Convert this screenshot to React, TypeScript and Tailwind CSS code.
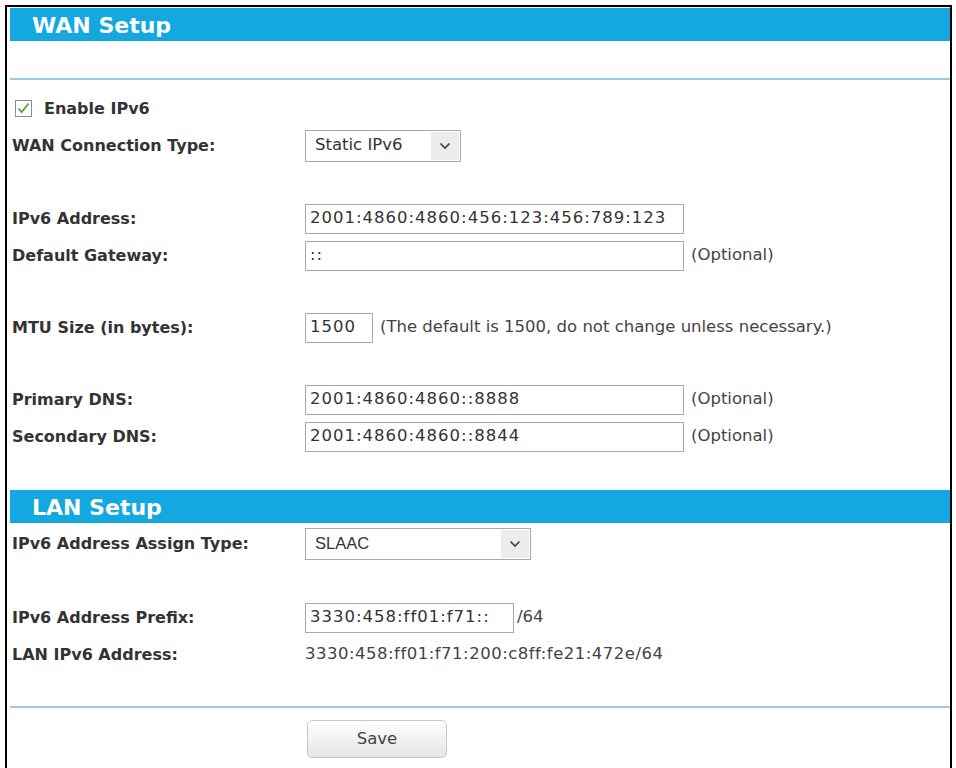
import React from "react";

const font = { fontFamily: '"DejaVu Sans", Verdana, sans-serif' };

function SectionHeader({ title }: { title: string }) {
  return (
    <div className="h-[33px] bg-[#13a8e0] flex items-center pl-[22px] pt-[3px]">
      <span className="text-[22px] font-bold text-white leading-none">{title}</span>
    </div>
  );
}

function Row({ label, children }: { label: string; children?: React.ReactNode }) {
  return (
    <div className="h-[37px] flex items-center">
      <div className="w-[295px] pl-[2px] text-[16px] font-bold text-[#333]">{label}</div>
      <div className="flex items-center">{children}</div>
    </div>
  );
}

function TextBox({ value, w }: { value: string; w: string }) {
  return (
    <div
      className={`${w} h-[30px] border border-[#a9a9a9] bg-white flex items-center pl-[4px] text-[16.5px] tracking-[1px] text-[#333] whitespace-nowrap overflow-hidden`}
    >
      {value}
    </div>
  );
}

function Chevron() {
  return (
    <svg width="12" height="8" viewBox="0 0 12 8" fill="none">
      <path d="M1.5 1.5l4.5 4.5 4.5-4.5" stroke="#444" strokeWidth="1.7" />
    </svg>
  );
}

function Select({ value, w, arial }: { value: string; w: string; arial?: boolean }) {
  return (
    <div className={`${w} h-[32px] border border-[#a9a9a9] bg-white flex items-stretch`}>
      <div
        className="flex-1 flex items-center pl-[9px] text-[16.5px] text-[#333]"
        style={arial ? { fontFamily: '"Liberation Sans", Arial, sans-serif' } : undefined}
      >
        {value}
      </div>
      <div className="w-[28px] bg-[#ececec] flex items-center justify-center m-px">
        <Chevron />
      </div>
    </div>
  );
}

function Note({ children }: { children: React.ReactNode }) {
  return <span className="ml-[7px] text-[16.5px] text-[#444] whitespace-nowrap">{children}</span>;
}

export default function App() {
  return (
    <div className="min-h-screen bg-white pt-[5px] pl-[5px]" style={font}>
      <div className="w-[947px] border-2 border-black pl-[3px] pt-px pb-[24px]">
        <SectionHeader title="WAN Setup" />
        <div className="h-[37px]" />
        <div className="h-[2px] bg-[#98cfe0]" />
        <div className="h-[10px]" />

        <div className="h-[37px] flex items-center pl-[5px]">
          <svg width="17" height="17" viewBox="0 0 17 17">
            <rect x="0.5" y="0.5" width="16" height="16" fill="white" stroke="#8a8a8a" />
            <path d="M3.5 8.5l3.2 3.6L13.5 3.5" fill="none" stroke="#5aa23c" strokeWidth="1.8" />
          </svg>
          <span className="ml-[12px] text-[16px] font-bold text-[#333]">Enable IPv6</span>
        </div>
        <Row label="WAN Connection Type:">
          <Select value="Static IPv6" w="w-[156px]" />
        </Row>

        <div className="h-[36px]" />
        <Row label="IPv6 Address:">
          <TextBox value="2001:4860:4860:456:123:456:789:123" w="w-[379px]" />
        </Row>
        <Row label="Default Gateway:">
          <TextBox value="::" w="w-[379px]" />
          <Note>(Optional)</Note>
        </Row>

        <div className="h-[35px]" />
        <Row label="MTU Size (in bytes):">
          <TextBox value="1500" w="w-[68px]" />
          <Note>(The default is 1500, do not change unless necessary.)</Note>
        </Row>

        <div className="h-[35px]" />
        <Row label="Primary DNS:">
          <TextBox value="2001:4860:4860::8888" w="w-[379px]" />
          <Note>(Optional)</Note>
        </Row>
        <Row label="Secondary DNS:">
          <TextBox value="2001:4860:4860::8844" w="w-[379px]" />
          <Note>(Optional)</Note>
        </Row>

        <div className="h-[35px]" />
        <SectionHeader title="LAN Setup" />
        <div className="h-[2px]" />
        <Row label="IPv6 Address Assign Type:">
          <Select value="SLAAC" w="w-[226px]" arial />
        </Row>

        <div className="h-[37px]" />
        <Row label="IPv6 Address Prefix:">
          <TextBox value="3330:458:ff01:f71::" w="w-[209px]" />
          <span className="ml-[3px] text-[16.5px] text-[#444]">/64</span>
        </Row>
        <Row label="LAN IPv6 Address:">
          <span className="text-[16.5px] tracking-[0.5px] text-[#444]">
            3330:458:ff01:f71:200:c8ff:fe21:472e/64
          </span>
        </Row>

        <div className="h-[33px]" />
        <div className="h-[2px] bg-[#98cfe0]" />
        <div className="h-[12px]" />
        <div className="pl-[297px]">
          <button className="w-[140px] h-[38px] rounded-[5px] border border-[#c8c8c8] bg-gradient-to-b from-white to-[#e6e6e6] text-[16.5px] text-[#444]">
            Save
          </button>
        </div>
      </div>
    </div>
  );
}
